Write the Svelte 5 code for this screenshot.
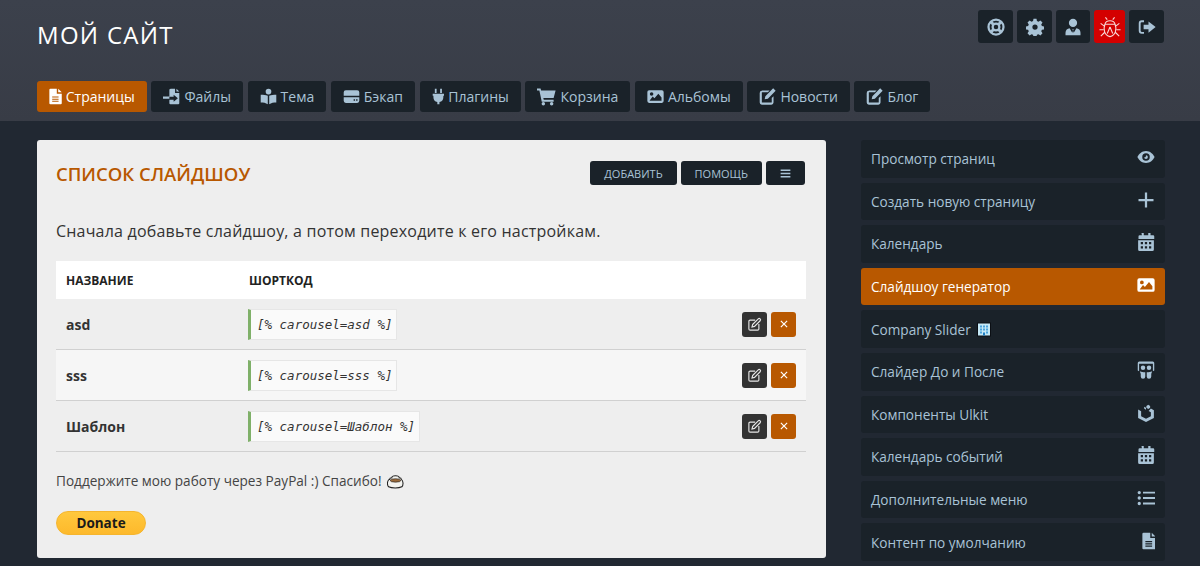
<script>
	const tabs = [
		{ label: 'Страницы', icon: 'file', active: true },
		{ label: 'Файлы', icon: 'import' },
		{ label: 'Тема', icon: 'reader' },
		{ label: 'Бэкап', icon: 'hdd' },
		{ label: 'Плагины', icon: 'plug' },
		{ label: 'Корзина', icon: 'cart' },
		{ label: 'Альбомы', icon: 'image' },
		{ label: 'Новости', icon: 'edit' },
		{ label: 'Блог', icon: 'edit' }
	];

	const tools = [
		{ icon: 'lifering' },
		{ icon: 'cog' },
		{ icon: 'user', narrow: true },
		{ icon: 'bug', danger: true },
		{ icon: 'signout' }
	];

	const rows = [
		{ name: 'asd', code: '[% carousel=asd %]' },
		{ name: 'sss', code: '[% carousel=sss %]' },
		{ name: 'Шаблон', code: '[% carousel=Шаблон %]' }
	];

	const side = [
		{ label: 'Просмотр страниц', icon: 'eye' },
		{ label: 'Создать новую страницу', icon: 'plus' },
		{ label: 'Календарь', icon: 'calendar' },
		{ label: 'Слайдшоу генератор', icon: 'image', active: true },
		{ label: 'Company Slider', icon: null, emoji: true },
		{ label: 'Слайдер До и После', icon: 'slideshare' },
		{ label: 'Компоненты Ulkit', icon: 'uikit' },
		{ label: 'Календарь событий', icon: 'calendar' },
		{ label: 'Дополнительные меню', icon: 'list' },
		{ label: 'Контент по умолчанию', icon: 'file' }
	];

	// простые контуры иконок, сетка 24x24
	const paths = {
		file: 'M5 1h9v7h7v13.500a1.500 1.500 0 0 1-1.500 1.500h-14.500a1.500 1.500 0 0 1-1.500-1.500v-19a1.500 1.500 0 0 1 1.500-1.500zM16 1l5 5h-5zM7.500 12v1.500h9v-1.500zM7.500 15v1.500h9v-1.500zM7.500 18v1.500h9v-1.500z',
		import: 'M11 1h6v6h6v14.500a1.500 1.500 0 0 1-1.500 1.500h-11a1.500 1.500 0 0 1-1.500-1.500v-5h6v3l6-5-6-5v3h-6v-10a1 1 0 0 1 1-1zM19 1l4 4h-4zM0 12h9v3h-9z',
		reader: 'M12 1a4 4 0 1 1 0 8 4 4 0 0 1 0-8zM11 11v12c-3-2-6-2.500-10-2.500v-11c4 0 7 .5 10 1.500zM13 11c3-1 6-1.500 10-1.500v11c-4 0-7 .5-10 2.500z',
		hdd: 'M4 3h16a3 3 0 0 1 3 3v5h-22v-5a3 3 0 0 1 3-3zM1 13h22v5a3 3 0 0 1-3 3h-16a3 3 0 0 1-3-3zM15 16v2h2v-2zM18.500 16v2h2v-2z',
		plug: 'M7 1h2.500v6h-2.500zM14.500 1h2.500v6h-2.500zM4 8h16v3h-1v2a7 7 0 0 1-5.500 6.800v3.200h-3v-3.200a7 7 0 0 1-5.500-6.800v-2h-1z',
		cart: 'M0 2h4.500l.7 2.500h18.300l-2.500 9.500h-13l.5 2h12.500v2.500h-15l-3-14h-3zM8 19a2.200 2.200 0 1 1 0 4.400 2.200 2.200 0 0 1 0-4.400zM18.500 19a2.200 2.200 0 1 1 0 4.400 2.200 2.200 0 0 1 0-4.400z',
		image: 'M3 3h18a2.500 2.500 0 0 1 2.500 2.500v13a2.500 2.500 0 0 1-2.500 2.500h-18a2.500 2.500 0 0 1-2.500-2.500v-13a2.500 2.500 0 0 1 2.500-2.500zM6.500 6a2.500 2.500 0 1 0 0 5 2.500 2.500 0 0 0 0-5zM3.500 18h17v-4.500l-4.500-5.500-5.500 6.500-2.500-2.500z',
		edit: 'M4 3.500h11l-2.500 2.500h-8a.5.5 0 0 0-.5.5v13.500a.5.5 0 0 0 .5.5h13a.5.5 0 0 0 .5-.5v-6l2.500-2.500v9a3 3 0 0 1-3 3h-13.500a3 3 0 0 1-3-3v-13.500a3 3 0 0 1 3-3zM20 .5l3.500 3.500-11 11-4.500 1 1-4.500z',
		eye: 'M12 4c5.500 0 9.500 4 11.500 8-2 4-6 8-11.500 8s-9.500-4-11.500-8c2-4 6-8 11.500-8zM12 7a5 5 0 1 0 0 10 5 5 0 0 0 0-10zM12 9.500a2.500 2.500 0 1 1-2.500 2.500c.5.500 2.500.5 2.500-2.500z',
		plus: 'M10.500 2h3v8.500h8.500v3h-8.500v8.500h-3v-8.500h-8.500v-3h8.500z',
		calendar: 'M6 0h3v3h6v-3h3v3h3.500a1.500 1.500 0 0 1 1.500 1.500v3.500h-21v-3.500a1.500 1.500 0 0 1 1.500-1.500h3zM1.500 9.500h21v12.500a2 2 0 0 1-2 2h-17a2 2 0 0 1-2-2zM5 12v3h3v-3zM10.500 12v3h3v-3zM16 12v3h3v-3zM5 17.500v3h3v-3zM10.500 17.500v3h3v-3zM16 17.500v3h3v-3z',
		slideshare: 'M3 .5h18a2 2 0 0 1 2 2v10l-1.800 1.200v-10.200h-18.400v10.200l-1.800-1.200v-10a2 2 0 0 1 2-2zM8 6a3 3 0 1 1 0 6 3 3 0 0 1 0-6zM16 6a3 3 0 1 1 0 6 3 3 0 0 1 0-6zM4 13.500c2 .8 4 1.200 7 1.500v5.500a3 3 0 0 1-6 0v-3.500c-.5-1-.8-2.200-1-3.500zM20 13.500c-.2 1.300-.5 2.500-1 3.500v3.500a3 3 0 0 1-6 0v-5.500c3-.3 5-.7 7-1.500z',
		uikit: 'M15 1l2.500 1.500v2.500l-2.500 1.500-2.500-1.500v-2.500zM18.500 6l4 2.300v10.400l-10.500 5.300-10.500-5.300v-11.400l4 2.300v6.800l6.500 3.300 6.500-3.300v-5.400l-3-1.700zM9.500 3.500l2.500 1.500v2.500l-2.500-1.500z',
		list: 'M3 2.500a2.200 2.200 0 1 1 0 4.400 2.200 2.200 0 0 1 0-4.400zM8 3.500h16v2.500h-16zM3 9.800a2.200 2.200 0 1 1 0 4.400 2.200 2.200 0 0 1 0-4.400zM8 10.800h16v2.500h-16zM3 17.100a2.200 2.200 0 1 1 0 4.400 2.200 2.200 0 0 1 0-4.400zM8 18h16v2.500h-16z',
		cog: 'M10 1h4l.6 3 2 .9 2.600-1.700 2.800 2.800-1.700 2.600.9 2 2.800.6v4l-2.800.6-.9 2 1.700 2.600-2.800 2.800-2.600-1.700-2 .9-.6 2.800h-4l-.6-2.800-2-.9-2.600 1.700-2.800-2.800 1.700-2.600-.9-2-2.800-.6v-4l2.800-.6.9-2-1.700-2.600 2.800-2.800 2.600 1.700 2-.9zM12 8.500a3.500 3.500 0 1 0 0 7 3.500 3.500 0 0 0 0-7z',
		user: 'M12 1a5.500 5.500 0 1 1 0 11 5.500 5.500 0 0 1 0-11zM7.500 13.500l3.500 6 1-2.500-1-2h2l-1 2 1 2.500 3.500-6c3 .3 5.500 2.500 5.500 6v3.500h-20v-3.500c0-3.500 2.500-5.700 5.500-6z',
		signout: 'M8 3h-3a4 4 0 0 0-4 4v10a4 4 0 0 0 4 4h3v-2.500h-3a1.500 1.500 0 0 1-1.500-1.500v-10a1.500 1.500 0 0 1 1.500-1.500h3zM14 4.500l9.500 7.500-9.500 7.500v-4.500h-6.500v-6h6.500z',
		bars: 'M3 4.500h18v3h-18zM3 10.500h18v3h-18zM3 16.500h18v3h-18z',
		times: 'M5.500 3.500l6.500 6.500 6.500-6.500 2 2-6.500 6.500 6.500 6.500-2 2-6.500-6.500-6.500 6.500-2-2 6.500-6.500-6.500-6.500z',
		pen: 'M13 5h-8a2 2 0 0 0-2 2v12a2 2 0 0 0 2 2h12a2 2 0 0 0 2-2v-8M9 12l9-9a1.800 1.800 0 0 1 3 3l-9 9-4 1z'
	};

	// узкие иконки обрезаем по ширине
	const narrow = { file: true, plug: true };
</script>

{#snippet icon(name, size = 16)}
	{#if name === 'lifering'}
		<svg width={size} height={size} viewBox="0 0 24 24" fill="none" stroke="currentColor">
			<circle cx="12" cy="12" r="10" stroke-width="3" />
			<circle cx="12" cy="12" r="4.500" stroke-width="3" />
			<path d="M5 5l4 4M19 5l-4 4M5 19l4-4M19 19l-4-4" stroke-width="4" />
		</svg>
	{:else if name === 'bug'}
		<svg width={size} height={size} viewBox="0 0 24 24" fill="none" stroke="currentColor" stroke-width="1.200">
			<path d="M6.500 9c1-5 10-5 11 0zM6.500 9c-2 5-1 12 5.500 13.500 6.500-1.500 7.500-8.500 5.500-13.500M12 12l-3 7M12 12l3 7M9 4l-2-2.500M15 4l2-2.500M5.800 11l-4-3M18.200 11l4-3M5 15h-4.500M19 15h4.500M6 18l-4 4M18 18l4 4" />
		</svg>
	{:else if name === 'pen'}
		<svg width={size} height={size} viewBox="0 0 24 24" fill="none" stroke="currentColor" stroke-width="1.800"><path d={paths.pen} /></svg>
	{:else if narrow[name]}
		<svg width={size * 0.75} height={size} viewBox="3 0 18 24" fill="currentColor" fill-rule="evenodd"><path d={paths[name]} /></svg>
	{:else}
		<svg width={size} height={size} viewBox="0 0 24 24" fill="currentColor" fill-rule="evenodd"><path d={paths[name]} /></svg>
	{/if}
{/snippet}

<div class="page">
	<header class="top">
		<div class="brand-row">
			<h1>МОЙ САЙТ</h1>
			<div class="tools">
				{#each tools as t}
					<button class="tool" class:danger={t.danger} class:narrow={t.narrow}>{@render icon(t.icon, t.danger ? 22 : 18)}</button>
				{/each}
			</div>
		</div>
		<nav class="tabs">
			{#each tabs as t}
				<button class="tab" class:active={t.active}>
					{@render icon(t.icon, t.icon === 'cart' ? 19 : 17)}
					<span>{t.label}</span>
				</button>
			{/each}
		</nav>
	</header>

	<main class="content">
		<section class="card">
			<div class="card-head">
				<h2>СПИСОК СЛАЙДШОУ</h2>
				<div class="card-actions">
					<button class="small">ДОБАВИТЬ</button>
					<button class="small">ПОМОЩЬ</button>
					<button class="small burger">{@render icon('bars', 13)}</button>
				</div>
			</div>
			<p class="lead">Сначала добавьте слайдшоу, а потом переходите к его настройкам.</p>
			<table>
				<thead>
					<tr>
						<th class="col-name">НАЗВАНИЕ</th>
						<th>ШОРТКОД</th>
						<th></th>
					</tr>
				</thead>
				<tbody>
					{#each rows as r}
						<tr>
							<td class="name">{r.name}</td>
							<td><code>{r.code}</code></td>
							<td class="acts">
								<div class="act-row">
									<button class="act edit">{@render icon('pen', 15)}</button>
									<button class="act del">{@render icon('times', 10)}</button>
								</div>
							</td>
						</tr>
					{/each}
				</tbody>
			</table>
			<p class="thanks">
				Поддержите мою работу через PayPal :) Спасибо!
				<svg width="17" height="15" viewBox="0 0 16 14" stroke="#222" stroke-width="1">
					<path d="M2.500 5c0-1 1-1.500 2-1.500 0-2.500 7-2.500 7 0 1 0 2 .5 2 1.500 2 1.500 2 5.500.5 7-3 1.500-9.500 1.500-12.500 0-1.500-1.500-1.500-5.500.5-7z" fill="#f4f4f0" />
					<ellipse cx="8" cy="6" rx="5" ry="1.600" fill="#9a6a3a" stroke-width=".6" />
				</svg>
			</p>
			<button class="donate">Donate</button>
		</section>

		<aside class="side">
			{#each side as s}
				<button class="side-item" class:active={s.active}>
					<span class="side-label">{s.label}
						{#if s.emoji}
							<svg width="14" height="15" viewBox="0 0 14 14">
								<rect width="14" height="14" fill="#0b0f14" />
								<rect x="1" y="1" width="12" height="12" fill="#c5e9f7" />
								<path d="M3 3h2v2h-2zM6 3h2v2h-2zM9 3h2v2h-2zM3 6h2v2h-2zM6 6h2v2h-2zM9 6h2v2h-2zM3 9h2v2h-2zM9 9h2v2h-2z" fill="#4aa3dc" />
								<rect x="6" y="10" width="2" height="3" fill="#1f7fc4" />
							</svg>
						{/if}
					</span>
					{#if s.icon}<span class="side-icon">{@render icon(s.icon, 18)}</span>{/if}
				</button>
			{/each}
		</aside>
	</main>
</div>

<style>
	:global(body) {
		margin: 0;
		background: #212832;
		font-family: 'Open Sans', 'Noto Sans', sans-serif;
	}

	.page {
		height: 566px;
		overflow: hidden;
	}

	button {
		font-family: inherit;
		border: 0;
		cursor: pointer;
	}

	svg {
		display: block;
		flex-shrink: 0;
	}

	/* 헤더 */
	.top {
		height: 121px;
		box-sizing: border-box;
		padding: 10px 36px 0 37px;
		background: linear-gradient(#3c414c, #383c46);
	}

	.brand-row {
		display: flex;
		justify-content: space-between;
		height: 71px;
	}

	h1 {
		margin: 9px 0 0;
		font-size: 24px;
		font-weight: 400;
		line-height: 32px;
		letter-spacing: 1.300px;
		color: #fff;
	}

	.tools {
		display: flex;
		gap: 4px;
		align-items: flex-start;
	}

	.tool {
		width: 35px;
		height: 33px;
		padding: 0;
		display: flex;
		align-items: center;
		justify-content: center;
		background: #1a2229;
		color: #a9c3d6;
		border-radius: 3px;
	}

	.tool.narrow {
		width: 34px;
	}

	.tool.danger {
		width: 31px;
		background: #d40000;
		color: #f8d8d8;
	}

	.tabs {
		display: flex;
		gap: 4.600px;
	}

	.tab {
		height: 31px;
		padding: 0 12px;
		display: flex;
		align-items: center;
		gap: 4px;
		background: #1a2229;
		color: #a9c3d6;
		border-radius: 3px;
		font-size: 14px;
	}

	.tab.active {
		background: #b85800;
		color: #fff;
	}

	/* 본문 */
	.content {
		display: flex;
		padding: 19px 35px 0 37px;
		gap: 35px;
		align-items: flex-start;
	}

	.card {
		width: 789px;
		height: 418px;
		box-sizing: border-box;
		padding: 21px 19px 0;
		background: #eeeeee;
		border-radius: 3px;
	}

	.card-head {
		display: flex;
		justify-content: space-between;
		align-items: center;
		height: 24px;
		padding-right: 2px;
	}

	h2 {
		margin: 1px 0 0;
		font-size: 18.500px;
		font-weight: 600;
		color: #b85800;
	}

	.card-actions {
		display: flex;
		gap: 4px;
	}

	.small {
		height: 24px;
		padding: 0 14px;
		background: #1a2229;
		color: #a9c3d6;
		border-radius: 3px;
		font-size: 11px;
	}

	.burger {
		width: 39px;
		padding: 0;
		display: flex;
		align-items: center;
		justify-content: center;
	}

	.lead {
		margin: 34px 0 18px;
		font-size: 16px;
		line-height: 24px;
		color: #333;
		letter-spacing: .2px;
	}

	table {
		width: 750px;
		border-collapse: collapse;
	}

	th {
		height: 38px;
		padding: 0 10px;
		background: #fff;
		text-align: left;
		font-size: 12px;
		font-weight: 700;
		color: #222;
	}

	.col-name {
		width: 163px;
	}

	td {
		height: 50px;
		padding: 0 10px;
		border-bottom: 1px solid #d0d0d0;
	}

	tbody tr:nth-child(even) td {
		background: #f6f6f6;
	}

	.name {
		font-size: 14px;
		font-weight: 700;
		color: #333;
	}

	code {
		display: inline-block;
		padding: 0 4px 0 6px;
		height: 29px;
		line-height: 29px;
		background: #fafafa;
		border: 1px solid #e6e6e6;
		border-left: 3px solid #7fb069;
		margin-left: -1px;
		font-family: 'DejaVu Sans Mono', monospace;
		font-style: italic;
		font-size: 12.500px;
		color: #333;
	}

	.acts {
		width: 70px;
	}

	.act-row {
		display: flex;
		justify-content: flex-end;
		gap: 4px;
	}

	.act {
		display: flex;
		align-items: center;
		justify-content: center;
		width: 25px;
		height: 25px;
		padding: 0;
		border-radius: 3px;
	}

	.edit {
		background: #333;
		color: #e8e8e8;
	}

	.del {
		background: #b85800;
		color: #fff;
	}

	.thanks {
		margin: 19px 0 0;
		display: flex;
		align-items: center;
		gap: 5px;
		font-size: 13.600px;
		line-height: 20px;
		color: #444;
	}

	.donate {
		display: block;
		margin-top: 20px;
		width: 90px;
		height: 24px;
		padding: 0;
		background: linear-gradient(#ffc83d, #fdb92c);
		border: 1px solid #f5b52e;
		border-radius: 13px;
		font-size: 13.500px;
		font-weight: 700;
		color: #1a1a1a;
	}

	/* 사이드바 */
	.side {
		width: 304px;
		display: flex;
		flex-direction: column;
		gap: 5px;
	}

	.side-item {
		height: 37.600px;
		flex-shrink: 0;
		padding: 0 10px;
		display: flex;
		align-items: center;
		justify-content: space-between;
		background: #1a2229;
		color: #a9c3d6;
		border-radius: 3px;
		font-size: 13.600px;
		text-align: left;
	}

	.side-label {
		display: flex;
		align-items: center;
		gap: 6px;
	}

	.side-icon {
		display: block;
		margin-bottom: 3px;
	}

	.side-item.active {
		background: #b85800;
		color: #fff;
	}
</style>
